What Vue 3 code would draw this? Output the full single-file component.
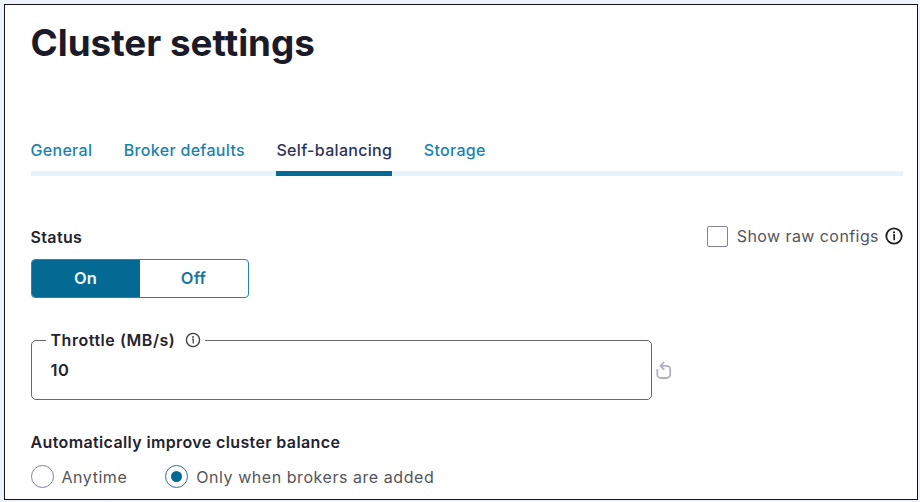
<script setup>
import { ref } from 'vue'

const tabs = [
  { id: 'general', label: 'General' },
  { id: 'broker', label: 'Broker defaults' },
  { id: 'balancing', label: 'Self-balancing' },
  { id: 'storage', label: 'Storage' },
]
const activeTab = ref('balancing')
const status = ref('On')
const throttle = ref('10')
const options = ['Anytime', 'Only when brokers are added']
const balance = ref(options[1])
</script>

<template>
  <div class="page">
    <main class="panel">
      <h1 class="title">Cluster settings</h1>

      <nav class="tabs">
        <button
          v-for="tab in tabs"
          :key="tab.id"
          :class="['tab', { active: tab.id === activeTab }]"
          @click="activeTab = tab.id"
        ><span>{{ tab.label }}</span></button>
      </nav>

      <div class="status-row">
        <span class="label status-label">Status</span>
        <label class="raw">
          <span class="checkbox"></span>
          <span class="raw-text">Show raw configs</span>
          <svg class="raw-info" viewBox="0 0 18 18" fill="none" stroke="#1d1d26">
            <circle cx="9" cy="9" r="7.7" stroke-width="1.8" />
            <path d="M8 8h1.2v5.3" stroke-width="1.6" />
            <circle cx="9" cy="5.3" r="1.1" fill="#1d1d26" stroke="none" />
          </svg>
        </label>
      </div>

      <div class="toggle">
        <button
          v-for="s in ['On', 'Off']"
          :key="s"
          :class="['toggle-item', { selected: s === status }]"
          @click="status = s"
        >{{ s }}</button>
      </div>

      <div class="field-row">
        <fieldset class="field">
          <legend class="legend">
            <span class="label legend-text">Throttle (MB/s)</span>
            <svg class="field-info" viewBox="0 0 16 16" fill="none" stroke="#3c3c46">
              <circle cx="8" cy="8" r="6.6" stroke-width="1.3" />
              <path d="M7.2 7.2h1v4.3" stroke-width="1.2" />
              <circle cx="8" cy="5" r=".9" fill="#3c3c46" stroke="none" />
            </svg>
          </legend>
          <div class="value">{{ throttle }}</div>
        </fieldset>
        <svg class="reset" viewBox="0 0 16 19" fill="none" stroke="#b2b0c6" stroke-width="1.8" stroke-linecap="round" stroke-linejoin="round">
          <path d="M1.3 9v4.4a3.6 3.6 0 0 0 3.6 3.6h5.7a3.6 3.6 0 0 0 3.6-3.6V8.4a3.6 3.6 0 0 0-3.6-3.6H5" />
          <path d="M7.6 1.6 4.4 4.8l3.2 3.2" />
        </svg>
      </div>

      <div class="label auto-label">Automatically improve cluster balance</div>
      <div class="radios">
        <label v-for="(o, i) in options" :key="o" :class="['radio', 'radio-' + i]" @click="balance = o">
          <span :class="['dot', { checked: o === balance }]"></span>
          <span class="radio-text">{{ o }}</span>
        </label>
      </div>
    </main>
  </div>
</template>

<style>
body {
  background: #edf2fd;
}
</style>

<style scoped>
.page {
  box-sizing: border-box;
  width: 920px;
  height: 502px;
  padding: 4px 2px 2px 4px;
  background: #edf2fd;
  font-family: Inter, "Liberation Sans", sans-serif;
}
.panel {
  box-sizing: border-box;
  width: 914px;
  height: 496px;
  padding: 15px 14px 0 25.5px;
  border: 1px solid #14141a;
  background: #fff;
  overflow: hidden;
}
button {
  border: 0;
  padding: 0;
  margin: 0;
  background: none;
  font: inherit;
}
.title {
  margin: 0;
  height: 46px;
  line-height: 46px;
  font-size: 36.8px;
  font-weight: 700;
  color: #1b1a28;
}
.tabs {
  display: flex;
  gap: 31.5px;
  margin-top: 74px;
  height: 36px;
  box-shadow: inset 0 -5px #e5f3fc;
}
.tab {
  display: flex;
  box-sizing: border-box;
  height: 36px;
  line-height: 20px;
  font-size: 16px;
  letter-spacing: 0.31px;
  font-weight: 500;
  color: #1a82ae;
  white-space: nowrap;
}
.tab.active {
  color: #2b3459;
  border-bottom: 5px solid #046a94;
}
.label {
  font-size: 16px;
  letter-spacing: 0.37px;
  line-height: 20px;
  font-weight: 600;
  color: #24232f;
  white-space: nowrap;
}
.status-row {
  display: flex;
  justify-content: space-between;
  margin-top: 49px;
  height: 24px;
}
.status-label {
  margin-top: 2px;
}
.raw {
  display: flex;
  align-items: center;
  height: 22px;
}
.checkbox {
  box-sizing: border-box;
  width: 21px;
  height: 21px;
  border: 1.5px solid #8580a0;
  border-radius: 2px;
}
.raw-text {
  margin-left: 9px;
  font-size: 16px;
  letter-spacing: 0.42px;
  color: #55555b;
  white-space: nowrap;
}
.raw-info {
  width: 18px;
  height: 18px;
  margin-left: 6px;
}
.toggle {
  display: flex;
  box-sizing: border-box;
  width: 218px;
  height: 39px;
  margin-top: 10px;
  border: 1px solid #2c83a8;
  border-radius: 4px;
  overflow: hidden;
}
.toggle-item {
  width: 109px;
  padding-bottom: 1px;
  font-size: 16.5px;
  letter-spacing: 0.2px;
  font-weight: 600;
  color: #1a769e;
}
.toggle-item.selected {
  background: #046a94;
  color: #eef8fc;
}
.field-row {
  display: flex;
  margin-top: 32px;
  height: 70px;
}
.field {
  box-sizing: border-box;
  width: 621px;
  height: 70px;
  min-width: 0;
  margin: 0;
  padding: 0 0 0 14px;
  border: 1.5px solid #66666c;
  border-radius: 5px;
}
.legend {
  display: flex;
  align-items: center;
  height: 20px;
  padding: 0 4px 0 5px;
}
.legend-text {
  letter-spacing: 0.53px;
}
.field-info {
  width: 16px;
  height: 16px;
  margin-left: 9.5px;
}
.value {
  padding: 10px 0 0 5px;
  font-size: 16.5px;
  letter-spacing: 0.5px;
  line-height: 20px;
  font-weight: 600;
  color: #24232f;
}
.reset {
  width: 16px;
  height: 19px;
  margin: 31px 0 0 4px;
}
.auto-label {
  margin-top: 32px;
}
.radios {
  display: flex;
  margin-top: 13px;
  height: 23px;
}
.radio {
  display: flex;
  align-items: center;
}
.radio-1 {
  margin-left: 38px;
}
.dot {
  display: flex;
  box-sizing: border-box;
  align-items: center;
  justify-content: center;
  width: 23px;
  height: 23px;
  border: 1px solid #8580a0;
  border-radius: 50%;
}
.dot.checked {
  border-color: #1a769e;
}
.dot.checked::after {
  content: "";
  width: 11px;
  height: 11px;
  border-radius: 50%;
  background: #046a94;
}
.radio-text {
  margin-left: 8px;
  font-size: 16px;
  letter-spacing: 0.55px;
  color: #55555b;
  white-space: nowrap;
}
</style>
